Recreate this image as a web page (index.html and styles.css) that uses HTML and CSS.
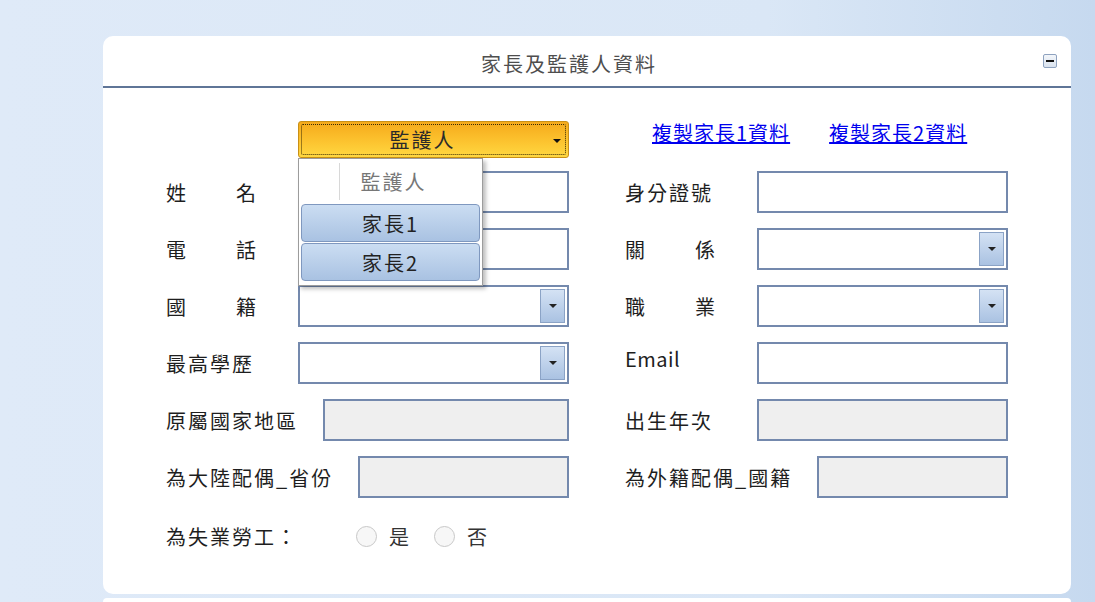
FILE: index.html
```html
<!DOCTYPE html>
<html lang="zh-Hant">
<head>
    <meta charset="UTF-8">
    <meta name="viewport" content="width=device-width, initial-scale=1.0">
    <title>家長及監護人資料</title>
    <link rel="stylesheet" href="styles.css">
</head>
<body>
    <div class="panel">
        <div class="panel-head">
            <h2>家長及監護人資料</h2>
            <span class="collapse"></span>
        </div>
        <div class="panel-body">
            <div class="top-row">
                <div class="cell">
                    <span class="label"></span>
                    <div class="picker">
                        <div class="picker-box">監護人<span class="caret"></span></div>
                        <ul class="picker-menu">
                            <li class="current">監護人</li>
                            <li class="opt">家長1</li>
                            <li class="opt">家長2</li>
                        </ul>
                    </div>
                </div>
                <div class="links">
                    <a href="#">複製家長1資料</a>
                    <a href="#">複製家長2資料</a>
                </div>
            </div>

            <div class="form-grid">
                <div class="cell">
                    <span class="label"><span class="spread"><i>姓</i><i>名</i></span></span>
                    <input class="field" type="text">
                </div>
                <div class="cell">
                    <span class="label">身分證號</span>
                    <input class="field" type="text">
                </div>

                <div class="cell">
                    <span class="label"><span class="spread"><i>電</i><i>話</i></span></span>
                    <input class="field" type="text">
                </div>
                <div class="cell">
                    <span class="label"><span class="spread"><i>關</i><i>係</i></span></span>
                    <div class="field select"><span class="drop"></span></div>
                </div>

                <div class="cell">
                    <span class="label"><span class="spread"><i>國</i><i>籍</i></span></span>
                    <div class="field select"><span class="drop"></span></div>
                </div>
                <div class="cell">
                    <span class="label"><span class="spread"><i>職</i><i>業</i></span></span>
                    <div class="field select"><span class="drop"></span></div>
                </div>

                <div class="cell">
                    <span class="label">最高學歷</span>
                    <div class="field select"><span class="drop"></span></div>
                </div>
                <div class="cell">
                    <span class="label email">Email</span>
                    <input class="field" type="text">
                </div>

                <div class="cell">
                    <span class="label">原屬國家地區</span>
                    <input class="field locked" type="text" disabled>
                </div>
                <div class="cell">
                    <span class="label">出生年次</span>
                    <input class="field locked" type="text" disabled>
                </div>

                <div class="cell">
                    <span class="label">為大陸配偶_省份</span>
                    <input class="field locked" type="text" disabled>
                </div>
                <div class="cell">
                    <span class="label">為外籍配偶_國籍</span>
                    <input class="field locked" type="text" disabled>
                </div>
            </div>

            <div class="radio-row">
                <span class="label wide">為失業勞工：</span>
                <label class="radio"><span class="dot"></span>是</label>
                <label class="radio"><span class="dot"></span>否</label>
            </div>
        </div>
    </div>

    <div class="panel next"></div>
</body>
</html>
```

FILE: styles.css
```css
* {
    box-sizing: border-box;
}
html, body {
    height: 602px;
    overflow: hidden;
}
body {
    margin: 0;
    padding: 36px 24px 0 103px;
    font-family: "Noto Sans CJK TC", "Noto Sans", sans-serif;
    color: #1e1e1e;
    background: linear-gradient(to right, #dfeaf8 0%, #dae7f6 70%, #c6d9ef 100%);
}
.panel {
    width: 968px;
    height: 558px;
    background: #fff;
    border-radius: 10px;
}
.panel.next {
    height: 4px;
    margin-top: 4px;
    border-radius: 10px 10px 0 0;
}
.panel-head {
    display: flex;
    align-items: center;
    height: 52px;
    padding-top: 4px;
    border-bottom: 2px solid #5f7597;
}
.panel-head h2 {
    flex: 1;
    margin: 0;
    text-align: center;
    font-size: 20px;
    font-weight: normal;
    letter-spacing: 2px;
    color: #4e4e4e;
}
.collapse {
    position: relative;
    width: 14px;
    height: 14px;
    margin: 0 14px 5px 8px;
    border: 1px solid #8ea2bf;
    border-radius: 2px;
    background: linear-gradient(#f3f6fa, #d9e2ee);
}
.collapse:after {
    content: "";
    position: absolute;
    left: 2px;
    top: 5px;
    width: 8px;
    height: 2px;
    background: #111;
}
.panel-body {
    padding: 33px 63px 0;
}

/* rows */
.top-row,
.form-grid {
    display: grid;
    grid-template-columns: 403px 383px;
    column-gap: 56px;
}
.top-row {
    height: 37px;
    margin-bottom: 13px;
}
.form-grid {
    grid-auto-rows: 42px;
    row-gap: 15px;
}
.cell {
    display: flex;
    align-items: center;
}
.label {
    min-width: 107px;
    margin-right: 25px;
    font-size: 20px;
    letter-spacing: 2px;
    white-space: nowrap;
}
.label.email {
    align-self: flex-start;
    margin-top: 2px;
    letter-spacing: 0.5px;
}
.spread {
    display: flex;
    justify-content: space-between;
    width: 92px;
}
.spread i {
    font-style: normal;
}

/* inputs */
.field {
    flex: 1;
    min-width: 0;
    height: 42px;
    margin: 0;
    border: 2px solid #7489ad;
    background: #fff;
    font: inherit;
}
.field.locked {
    background: #efefef;
}
.select {
    display: flex;
    justify-content: flex-end;
    padding: 2px;
}
.drop {
    display: flex;
    align-items: center;
    justify-content: center;
    width: 25px;
    border: 1px solid #8ba3c6;
    background: linear-gradient(#d4e2f4, #aac2e2);
}
.drop:after {
    content: "";
    border-left: 4px solid transparent;
    border-right: 4px solid transparent;
    border-top: 4px solid #222;
}

/* who is the contact: picker */
.picker {
    position: relative;
    flex: 1;
}
.picker-box {
    position: relative;
    display: flex;
    align-items: center;
    justify-content: center;
    height: 37px;
    padding-right: 22px;
    border: 1px solid #c99016;
    border-radius: 3px;
    background: linear-gradient(#f5aa1b, #fcc32f 55%, #ffd841);
    font-size: 20px;
    letter-spacing: 2px;
    color: #2a2a2a;
}
.picker-box:before {
    content: "";
    position: absolute;
    top: 2px;
    right: 2px;
    bottom: 2px;
    left: 2px;
    border: 1px dotted #3a2c05;
    border-radius: 2px;
}
.caret {
    position: absolute;
    right: 7px;
    top: 17px;
    border-left: 4px solid transparent;
    border-right: 4px solid transparent;
    border-top: 4px solid #111;
}
.picker-menu {
    position: absolute;
    top: 37px;
    left: 0;
    z-index: 2;
    width: 185px;
    margin: 0;
    padding: 0 2px 3px;
    list-style: none;
    background: #fff;
    border: 1px solid #9c9c9c;
    box-shadow: 3px 3px 4px rgba(0, 0, 0, 0.25);
    font-size: 20px;
    letter-spacing: 2px;
}
.picker-menu li {
    display: flex;
    align-items: center;
    justify-content: center;
}
.picker-menu .current {
    position: relative;
    height: 45px;
    padding-left: 6px;
    color: #777;
}
.picker-menu .current:before {
    content: "";
    position: absolute;
    left: 38px;
    top: 4px;
    bottom: 4px;
    width: 1px;
    background: #d8d8d8;
}
.picker-menu .opt {
    height: 38px;
    margin-bottom: 1px;
    border: 1px solid #7f98bf;
    border-radius: 4px;
    background: linear-gradient(#cbddf2, #a9c2e2);
    color: #222;
}

/* copy links */
.links {
    display: flex;
    gap: 39px;
    padding-left: 27px;
    line-height: 24px;
}
.links a {
    font-size: 20px;
    letter-spacing: 1px;
    color: #0000ee;
}

/* yes / no */
.radio-row {
    display: flex;
    align-items: center;
    height: 24px;
    margin-top: 26px;
}
.label.wide {
    min-width: 190px;
    margin-right: 0;
}
.radio {
    display: flex;
    align-items: center;
    margin-right: 25px;
    font-size: 20px;
    color: #333;
}
.dot {
    width: 21px;
    height: 21px;
    margin-right: 12px;
    border: 1.5px solid #c8c8c8;
    border-radius: 50%;
    background: #f7f7f7;
}
```
